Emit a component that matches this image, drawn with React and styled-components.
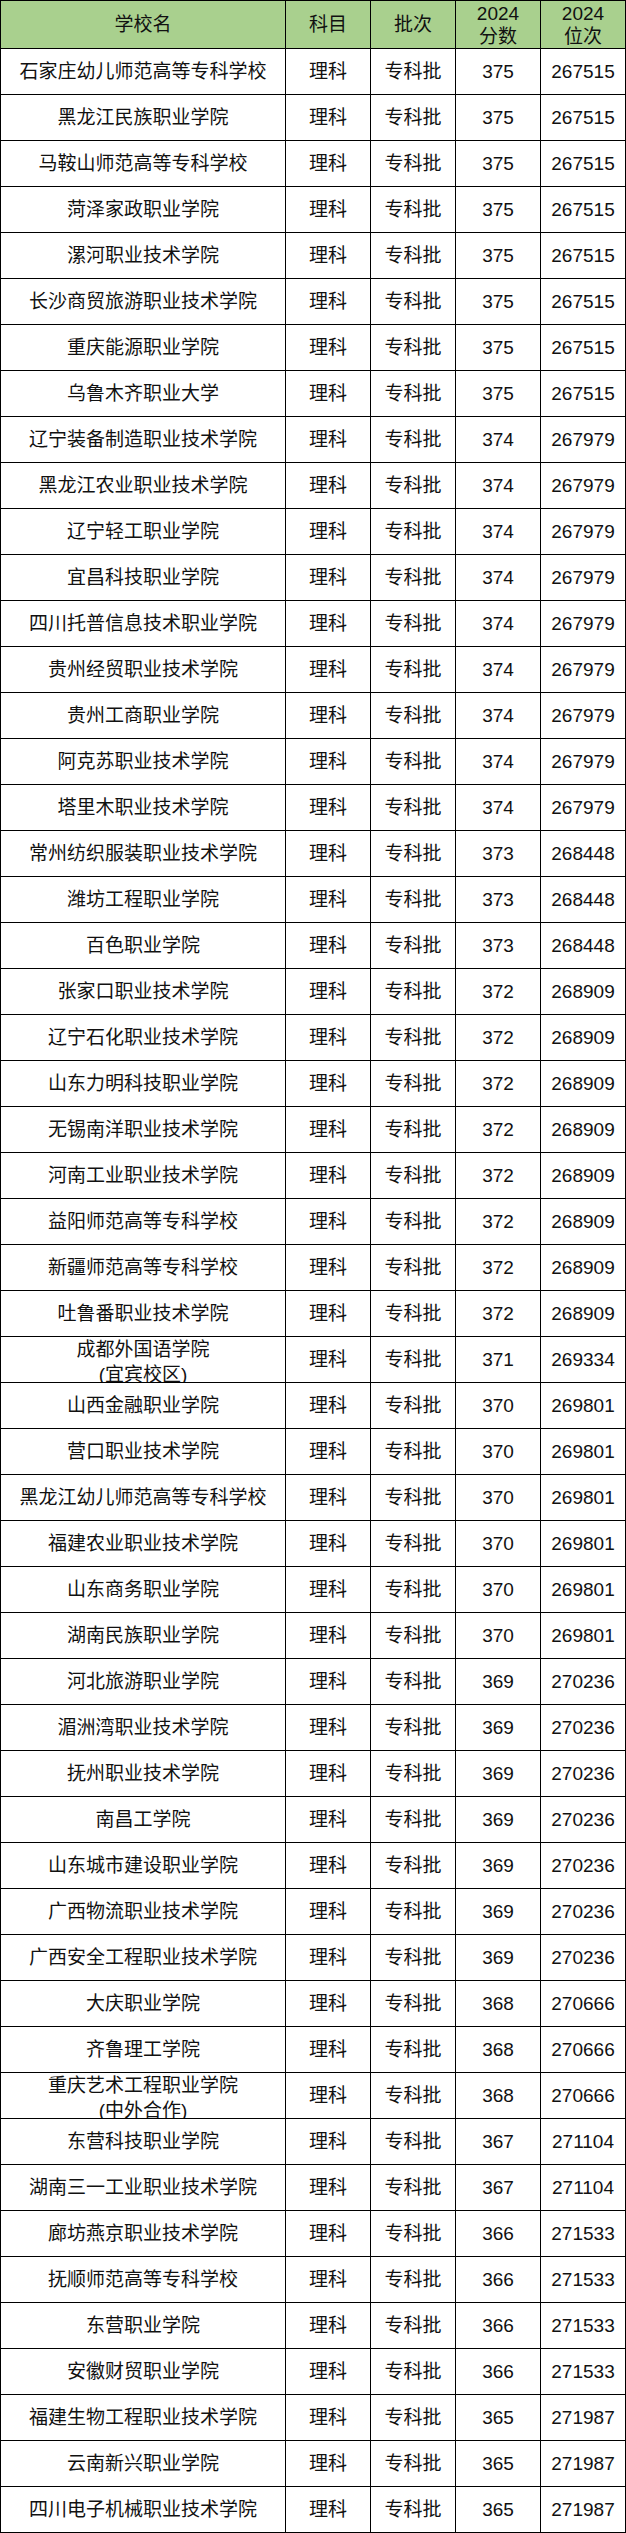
import React from "react";
import styled, { createGlobalStyle } from "styled-components";

const GlobalStyle = createGlobalStyle`
  html, body {
    margin: 0;
    padding: 0;
    background: #ffffff;
  }
  body {
    font-family: "Liberation Sans", "Noto Sans CJK SC", sans-serif;
    color: #000;
  }
`;

const Table = styled.div`
  display: grid;
  grid-template-columns: 285px repeat(4, 85px);
  width: 626px;
  box-sizing: border-box;
  border-top: 1px solid #000;
  border-left: 1px solid #000;
`;

const Cell = styled.div`
  box-sizing: border-box;
  height: ${(p) => (p.$head ? 48 : 46)}px;
  border-right: 1px solid #000;
  border-bottom: 1px solid #000;
  background: ${(p) => (p.$head ? "#A9D08E" : "#ffffff")};
  display: flex;
  flex-direction: column;
  align-items: center;
  justify-content: ${(p) => (p.$wrap ? "flex-start" : "center")};
  overflow: hidden;
  font-size: 19px;
  line-height: ${(p) => (p.$wrap ? 25 : 23)}px;
  text-align: center;
  white-space: nowrap;
  color: #111;
`;

const Line = styled.span`
  display: block;
`;

const rows = [
  ["石家庄幼儿师范高等专科学校", 375, 267515],
  ["黑龙江民族职业学院", 375, 267515],
  ["马鞍山师范高等专科学校", 375, 267515],
  ["菏泽家政职业学院", 375, 267515],
  ["漯河职业技术学院", 375, 267515],
  ["长沙商贸旅游职业技术学院", 375, 267515],
  ["重庆能源职业学院", 375, 267515],
  ["乌鲁木齐职业大学", 375, 267515],
  ["辽宁装备制造职业技术学院", 374, 267979],
  ["黑龙江农业职业技术学院", 374, 267979],
  ["辽宁轻工职业学院", 374, 267979],
  ["宜昌科技职业学院", 374, 267979],
  ["四川托普信息技术职业学院", 374, 267979],
  ["贵州经贸职业技术学院", 374, 267979],
  ["贵州工商职业学院", 374, 267979],
  ["阿克苏职业技术学院", 374, 267979],
  ["塔里木职业技术学院", 374, 267979],
  ["常州纺织服装职业技术学院", 373, 268448],
  ["潍坊工程职业学院", 373, 268448],
  ["百色职业学院", 373, 268448],
  ["张家口职业技术学院", 372, 268909],
  ["辽宁石化职业技术学院", 372, 268909],
  ["山东力明科技职业学院", 372, 268909],
  ["无锡南洋职业技术学院", 372, 268909],
  ["河南工业职业技术学院", 372, 268909],
  ["益阳师范高等专科学校", 372, 268909],
  ["新疆师范高等专科学校", 372, 268909],
  ["吐鲁番职业技术学院", 372, 268909],
  [["成都外国语学院", "(宜宾校区)"], 371, 269334],
  ["山西金融职业学院", 370, 269801],
  ["营口职业技术学院", 370, 269801],
  ["黑龙江幼儿师范高等专科学校", 370, 269801],
  ["福建农业职业技术学院", 370, 269801],
  ["山东商务职业学院", 370, 269801],
  ["湖南民族职业学院", 370, 269801],
  ["河北旅游职业学院", 369, 270236],
  ["湄洲湾职业技术学院", 369, 270236],
  ["抚州职业技术学院", 369, 270236],
  ["南昌工学院", 369, 270236],
  ["山东城市建设职业学院", 369, 270236],
  ["广西物流职业技术学院", 369, 270236],
  ["广西安全工程职业技术学院", 369, 270236],
  ["大庆职业学院", 368, 270666],
  ["齐鲁理工学院", 368, 270666],
  [["重庆艺术工程职业学院", "(中外合作)"], 368, 270666],
  ["东营科技职业学院", 367, 271104],
  ["湖南三一工业职业技术学院", 367, 271104],
  ["廊坊燕京职业技术学院", 366, 271533],
  ["抚顺师范高等专科学校", 366, 271533],
  ["东营职业学院", 366, 271533],
  ["安徽财贸职业学院", 366, 271533],
  ["福建生物工程职业技术学院", 365, 271987],
  ["云南新兴职业学院", 365, 271987],
  ["四川电子机械职业技术学院", 365, 271987],
];

export default function App() {
  return (
    <>
      <GlobalStyle />
      <Table>
        <Cell $head>学校名</Cell>
        <Cell $head>科目</Cell>
        <Cell $head>批次</Cell>
        <Cell $head>
          <Line>2024</Line>
          <Line>分数</Line>
        </Cell>
        <Cell $head>
          <Line>2024</Line>
          <Line>位次</Line>
        </Cell>
        {rows.map(([name, score, rank], i) => {
          const multi = Array.isArray(name);
          return (
            <React.Fragment key={i}>
              <Cell $wrap={multi}>
                {multi ? name.map((n) => <Line key={n}>{n}</Line>) : name}
              </Cell>
              <Cell>理科</Cell>
              <Cell>专科批</Cell>
              <Cell>{score}</Cell>
              <Cell>{rank}</Cell>
            </React.Fragment>
          );
        })}
      </Table>
    </>
  );
}
